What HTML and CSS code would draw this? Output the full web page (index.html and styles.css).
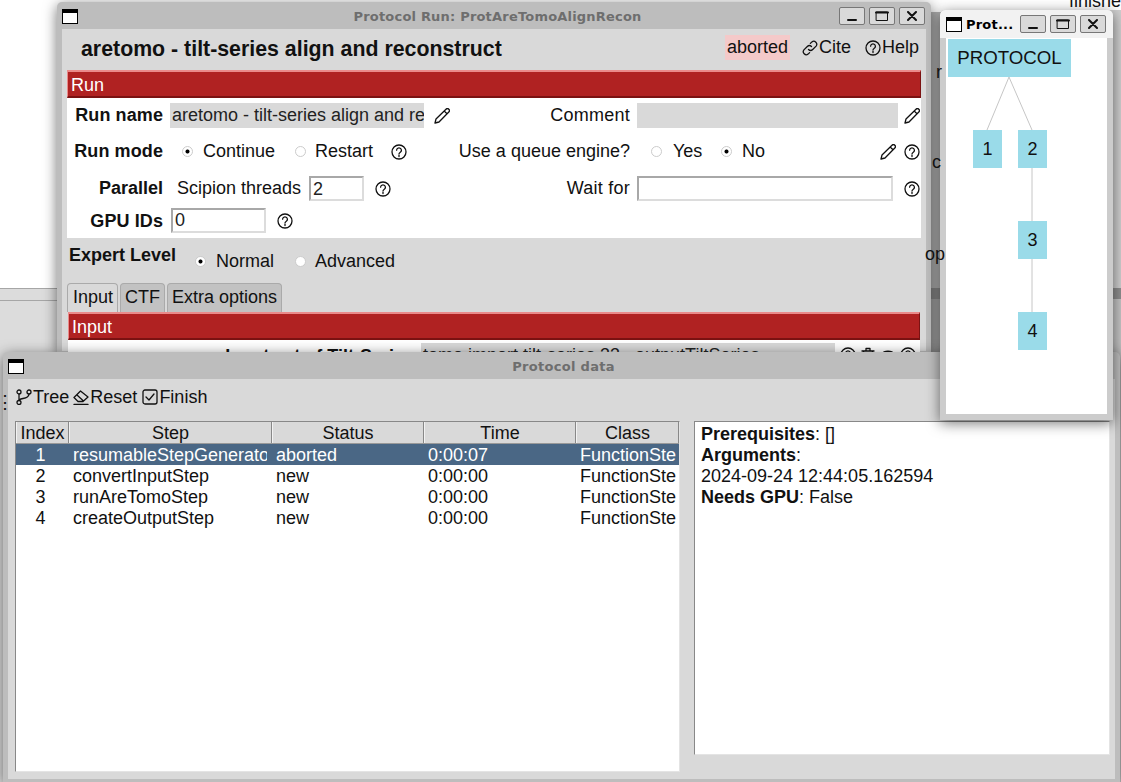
FILE: index.html
```html
<!DOCTYPE html>
<html lang="en">
<head>
    <meta charset="UTF-8">
    <title>Protocol Run</title>
    <link rel="stylesheet" href="styles.css">
</head>
<body>
    <svg class="defs" width="0" height="0">
        <symbol id="i-help" viewBox="0 0 16 16"><circle cx="8" cy="8" r="7"/><path d="M5.6 6.2a2.4 2.3 0 1 1 3.7 2c-.9.6-1.3 1-1.3 1.9"/><path class="dot" d="M8 11.4v1.2"/></symbol>
        <symbol id="i-pencil" viewBox="0 0 16 16"><path d="M12 1.2a1.6 1.6 0 0 1 2.8 2.8L5 14l-4 1 1-4zM10.2 3l2.8 2.8"/></symbol>
        <symbol id="i-link" viewBox="0 0 16 16"><path d="M6.5 9.5a3 3 0 0 0 4.2 0l3.4-3.4a3 3 0 0 0-4.2-4.2L8.4 3.4M9.5 6.500a3 3 0 0 0-4.200 0l-3.400 3.400a3 3 0 0 0 4.200 4.200l1.500-1.500"/></symbol>
        <symbol id="i-tree" viewBox="0 0 16 16"><circle cx="3" cy="3" r="2"/><circle cx="3" cy="13.5" r="2"/><circle cx="13" cy="3" r="2"/><path d="M3 5v6.500M13 5c0 3.500-3 4-6 4.500-2 .3-3 .8-4 1.500"/></symbol>
        <symbol id="i-eraser" viewBox="0 0 16 16"><path d="M1 8.500L7.500 2 15 8l-5 4.500H5zM4 6l6.500 6M1 15.500h14"/></symbol>
        <symbol id="i-check" viewBox="0 0 16 16"><rect x="1" y="1" width="14" height="14" rx="2"/><path d="M4 8l3 3 5-6"/></symbol>
        <symbol id="i-trash" viewBox="0 0 16 16"><path d="M2 4h12M6 4V1.500h4V4M3.500 4l1 11h7l1-11"/></symbol>
        <symbol id="i-eye" viewBox="0 0 16 16"><path d="M1 8c3-5 11-5 14 0-3 5-11 5-14 0z"/></symbol>
        <symbol id="b-min" viewBox="0 0 10 10"><path d="M1 9h8" stroke-width="2"/></symbol>
        <symbol id="b-max" viewBox="0 0 14 10"><path d="M1.500 1h11v8.500h-11z" stroke-width="1"/><path d="M1 1.500h12" stroke-width="2"/></symbol>
        <symbol id="b-close" viewBox="0 0 10 10"><path d="M1 1l8 8M9 1l-8 8" stroke-width="2"/></symbol>
    </svg>

    <!-- what shows of the main project window behind the dialogs -->
    <div class="desktop">
        <div class="bg-split"></div>
        <div class="bg-right"></div>
        <div class="bg-gap"></div>
        <span class="bg-text bg-finished">finished</span>
        <span class="bg-text bg-finished2">finishe</span>
        <span class="bg-text bg-r">r</span>
        <span class="bg-text bg-c">c</span>
        <span class="bg-text bg-op">op</span>
        <span class="bg-text bg-dots">⋮</span>
    </div>

    <div class="window win-run">
        <div class="titlebar">
            <span class="menu-icon"></span>
            <span class="title">Protocol Run: ProtAreTomoAlignRecon</span>
            <span class="wbtn"><svg class="b1"><use href="#b-min"/></svg></span>
            <span class="wbtn"><svg class="b2"><use href="#b-max"/></svg></span>
            <span class="wbtn"><svg class="b3"><use href="#b-close"/></svg></span>
        </div>
        <div class="content">
            <div class="head">
                <h1>aretomo - tilt-series align and reconstruct</h1>
                <span class="status-chip">aborted</span>
                <span class="head-link"><svg class="icon"><use href="#i-link"/></svg>Cite</span>
                <span class="head-link"><svg class="icon"><use href="#i-help"/></svg>Help</span>
            </div>

            <div class="section-bar">Run</div>
            <div class="form">
                <div class="row">
                    <b class="lbl">Run name</b>
                    <div class="cell">
                        <span class="ro-field rn">aretomo - tilt-series align and reconstruct</span>
                        <svg class="icon pencil-a"><use href="#i-pencil"/></svg>
                    </div>
                    <span class="lbl2 sp">Comment</span>
                    <span class="ro-field"></span>
                    <svg class="icon"><use href="#i-pencil"/></svg>
                </div>
                <div class="row mode">
                    <b class="lbl">Run mode</b>
                    <div class="cell">
                        <span class="radio on r-first"></span><span class="opt w-cont">Continue</span>
                        <span class="radio r-rest"></span><span class="opt w-rest">Restart</span>
                        <svg class="icon"><use href="#i-help"/></svg>
                    </div>
                    <span class="lbl2">Use a queue engine?</span>
                    <div class="cell">
                        <span class="radio r-yes"></span><span class="opt w-yes">Yes</span>
                        <span class="radio on"></span><span class="opt">No</span>
                        <svg class="icon pencil-b"><use href="#i-pencil"/></svg>
                    </div>
                    <svg class="icon"><use href="#i-help"/></svg>
                </div>
                <div class="row par">
                    <b class="lbl lbl-par">Parallel</b>
                    <div class="cell">
                        <span class="thr-label">Scipion threads</span>
                        <span class="input w-thr">2</span>
                        <svg class="icon help-thr"><use href="#i-help"/></svg>
                    </div>
                    <span class="lbl2 sp">Wait for</span>
                    <span class="input w-wait"></span>
                    <svg class="icon"><use href="#i-help"/></svg>
                </div>
                <div class="row gpu">
                    <b class="lbl">GPU IDs</b>
                    <div class="cell">
                        <span class="input w-gpu">0</span>
                        <svg class="icon help-gpu"><use href="#i-help"/></svg>
                    </div>
                </div>
            </div>

            <div class="expert">
                <b>Expert Level</b>
                <span class="radio on"></span><span class="opt w-norm">Normal</span>
                <span class="radio"></span><span class="opt">Advanced</span>
            </div>

            <div class="tabs">
                <span class="tab active">Input</span>
                <span class="tab">CTF</span>
                <span class="tab">Extra options</span>
            </div>
            <div class="section-bar input-bar">Input</div>
            <div class="input-panel">
                <b class="input-lbl">Input set of Tilt-Series</b>
                <span class="ro-field input-val">tomo.import tilt-series 33 . outputTiltSeries</span>
                <svg class="icon"><use href="#i-help"/></svg>
                <svg class="icon"><use href="#i-trash"/></svg>
                <svg class="icon"><use href="#i-eye"/></svg>
                <svg class="icon"><use href="#i-help"/></svg>
            </div>
        </div>
    </div>

    <div class="window win-data">
        <div class="titlebar">
            <span class="menu-icon"></span>
            <span class="title data-title">Protocol data</span>
        </div>
        <div class="content">
            <div class="toolbar">
                <span class="tool"><svg class="icon"><use href="#i-tree"/></svg>Tree</span>
                <span class="tool"><svg class="icon"><use href="#i-eraser"/></svg>Reset</span>
                <span class="tool"><svg class="icon"><use href="#i-check"/></svg>Finish</span>
            </div>
            <div class="panes">
                <div class="steps">
                    <div class="tr thead">
                        <span>Index</span><span>Step</span><span>Status</span><span>Time</span><span>Class</span>
                    </div>
                    <div class="tr selected">
                        <span>1</span><span>resumableStepGeneratorStep</span><span>aborted</span><span>0:00:07</span><span>FunctionStep</span>
                    </div>
                    <div class="tr">
                        <span>2</span><span>convertInputStep</span><span>new</span><span>0:00:00</span><span>FunctionStep</span>
                    </div>
                    <div class="tr">
                        <span>3</span><span>runAreTomoStep</span><span>new</span><span>0:00:00</span><span>FunctionStep</span>
                    </div>
                    <div class="tr">
                        <span>4</span><span>createOutputStep</span><span>new</span><span>0:00:00</span><span>FunctionStep</span>
                    </div>
                </div>
                <div class="details">
                    <p><b>Prerequisites</b>: []</p>
                    <p><b>Arguments</b>:</p>
                    <p>2024-09-24 12:44:05.162594</p>
                    <p><b>Needs GPU</b>: False</p>
                </div>
            </div>
        </div>
    </div>

    <div class="window win-tree">
        <div class="titlebar">
            <span class="menu-icon"></span>
            <span class="title tree-title">Prot...</span>
            <span class="wbtn"><svg class="b1"><use href="#b-min"/></svg></span>
            <span class="wbtn"><svg class="b2"><use href="#b-max"/></svg></span>
            <span class="wbtn"><svg class="b3"><use href="#b-close"/></svg></span>
        </div>
        <div class="canvas">
            <svg class="edges" width="161" height="376">
                <line x1="63" y1="39" x2="41" y2="92"/>
                <line x1="63" y1="39" x2="86" y2="92"/>
                <line x1="86" y1="130" x2="86" y2="183"/>
                <line x1="86" y1="221" x2="86" y2="274"/>
            </svg>
            <div class="node n-root">PROTOCOL</div>
            <div class="node n1">1</div>
            <div class="node n2">2</div>
            <div class="node n3">3</div>
            <div class="node n4">4</div>
        </div>
    </div>
</body>
</html>
```

FILE: styles.css
```css
*{
    margin: 0;
    padding: 0;
    box-sizing: border-box;
}
html, body{
    width: 100%;
    height: 100%;
    overflow: hidden;
}
body{
    position: relative;
    background: #fff;
    color: #111;
    font-family: "Liberation Sans", Arial, sans-serif;
    font-size: 18px;
}
.defs{
    position: absolute;
}
svg{
    fill: none;
    stroke: #111;
    stroke-width: 1.3;
    stroke-linecap: round;
    stroke-linejoin: round;
}

/* desktop behind the windows */
.desktop{
    position: absolute;
    inset: 0;
    overflow: hidden;
}
.bg-split{
    position: absolute;
    left: 0;
    right: 0;
    top: 288px;
    bottom: 0;
    background: #dcdcdc;
    border-top: 1px solid #a6a6a6;
}
.bg-split::before{
    content: "";
    display: block;
    height: 11px;
    border-bottom: 1px solid #a6a6a6;
}
.bg-right{
    position: absolute;
    left: 1100px;
    right: 0;
    top: 10px;
    bottom: 0;
    background: linear-gradient(#cfcfcf 0 278px, #8f8f8f 278px 289px, #c4c4c4 289px);
}
.bg-gap{
    position: absolute;
    left: 925px;
    width: 20px;
    top: 12px;
    bottom: 0;
    background: linear-gradient(#b4b4b4 0 276px, #8c8c8c 276px 287px, #a8a8a8 287px);
}
.bg-text{
    position: absolute;
    z-index: 1;
    font-size: 18px;
    line-height: 20px;
}
.bg-finished{ left: 340px; top: -17px; }
.bg-finished2{ left: 1069px; top: -9px; }
.bg-r{ left: 936px; top: 62px; }
.bg-c{ left: 932px; top: 152px; }
.bg-op{ left: 925px; top: 244px; }
.bg-dots{ left: -4px; top: 392px; }

/* windows */
.window{
    position: absolute;
    display: flex;
    flex-direction: column;
    background: #bdbdbd;
    border-radius: 5px 5px 0 0;
    box-shadow: 0 3px 14px rgba(0,0,0,.55);
    padding: 0 5px 3px;
    overflow: hidden;
}
.win-run{
    left: 57px;
    top: 2px;
    width: 874px;
    height: 352px;
}
.win-data{
    left: 3px;
    top: 352px;
    width: 1117px;
    height: 430px;
}
.win-tree{
    left: 940px;
    top: 10px;
    width: 173px;
    height: 410px;
    background: #ccc;
    padding: 0 6px 6px;
}
.titlebar{
    flex: none;
    display: flex;
    align-items: center;
    height: 27px;
    padding-top: 1px;
}
.win-run .titlebar{
    padding-right: 1px;
}
.win-tree .titlebar{
    height: 28px;
    margin: 0 -6px;
    padding: 0 7px 0 6px;
    background: #f2f2f2;
    border-radius: 5px 5px 0 0;
}
.menu-icon{
    flex: none;
    width: 16px;
    height: 15px;
    background: #fff;
    border: 1px solid #000;
    border-top-width: 4px;
}
.title{
    flex: 1;
    text-align: center;
    font-family: "DejaVu Sans", sans-serif;
    font-weight: bold;
    font-size: 13px;
    letter-spacing: .2px;
    color: #6e6e6e;
}
.win-run .title{
    padding-left: 82px;
}
.data-title{
    padding-right: 12px;
    letter-spacing: .3px;
}
.tree-title{
    text-align: left;
    padding-left: 4px;
    color: #000;
    white-space: nowrap;
}
.wbtn{
    flex: none;
    display: flex;
    align-items: center;
    justify-content: center;
    width: 26px;
    height: 18px;
    margin-left: 4px;
    background: #d9d9d9;
    border: 1px solid #777;
    border-radius: 2px;
}
.wbtn svg{
    stroke: #111;
    fill: none;
}
.wbtn .b1{ width: 10px; height: 10px; }
.wbtn .b2{ width: 14px; height: 10px; }
.wbtn .b3{ width: 10px; height: 10px; }
.content{
    flex: 1;
    min-height: 0;
    background: #d9d9d9;
}

/* run form */
.icon{
    flex: none;
    width: 16px;
    height: 16px;
}
.head{
    display: flex;
    align-items: center;
    height: 41px;
    padding-left: 19px;
}
.head h1{
    flex: 1;
    font-size: 21.33px;
    font-weight: bold;
    white-space: nowrap;
}
.status-chip{
    display: flex;
    align-items: center;
    height: 25px;
    margin-top: -5px;
    padding: 0 2px;
    background: #f4c9c9;
    margin-right: 12px;
}
.head-link{
    display: flex;
    align-items: center;
    margin-top: -4px;
    margin-right: 14px;
    gap: 1px;
}
.head-link:last-child{
    margin-right: 7px;
}
.section-bar{
    height: 28px;
    margin: 0 5px;
    padding-left: 3px;
    line-height: 27px;
    color: #fff;
    background: #b02222;
    border-top: 2px solid #ea8a8a;
    border-left: 1px solid #ea8a8a;
    border-right: 1px solid #7b1212;
    border-bottom: 2px solid #7b1212;
}
.form{
    height: 140px;
    margin: 0 5px;
    padding-top: 5px;
    background: #fff;
}
.row{
    display: grid;
    grid-template-columns: 96px 377px 76px 261px 16px;
    column-gap: 7px;
    align-items: center;
    height: 25px;
}
.row > svg{
    margin-left: -1px;
}
.row.mode{ margin-top: 11px; }
.row.par{ margin-top: 12px; }
.row.gpu{ margin-top: 7px; }
.lbl{
    text-align: right;
    letter-spacing: .1px;
}
.lbl-par{
    letter-spacing: 0;
}
.row.gpu .lbl{
    padding-top: 2px;
}
.lbl2{
    display: flex;
    justify-content: flex-end;
    white-space: nowrap;
}
.sp{
    letter-spacing: .25px;
}
.cell{
    display: flex;
    align-items: center;
    min-width: 0;
}
.ro-field{
    display: block;
    height: 25px;
    line-height: 25px;
    padding-left: 2px;
    background: #d9d9d9;
    overflow: hidden;
    white-space: nowrap;
    color: #222;
}
.rn{
    flex: none;
    width: 254px;
}
.pencil-a{
    margin-left: 10px;
}
.pencil-b{
    margin-left: auto;
    margin-right: 2px;
}
.radio{
    flex: none;
    width: 11px;
    height: 11px;
    margin-right: 10px;
    border-radius: 50%;
    background: #fff;
    border: 1px solid #ccc;
}
.radio.on{
    background: radial-gradient(circle, #000 0 1.6px, #fff 2.4px);
}
.r-first{ margin-left: 12px; }
.r-rest{ margin-right: 9px; }
.r-yes{ margin-left: 14px; margin-right: 11px; }
.opt{
    white-space: nowrap;
}
.w-cont{ width: 92px; }
.w-rest{ width: 76px; }
.w-yes{ width: 48px; }
.w-norm{ width: 79px; }
.input{
    display: block;
    height: 25px;
    line-height: 22px;
    padding-left: 2px;
    background: #fff;
    border: 2px solid;
    border-color: #a8a8a8 #dcdcdc #dcdcdc #a8a8a8;
    color: #222;
}
.thr-label{
    margin-left: 7px;
    margin-right: 8px;
    white-space: nowrap;
}
.w-thr{ width: 55px; }
.help-thr{ margin-left: 11px; }
.w-wait{ width: 256px; }
.w-gpu{ width: 95px; margin-left: 1px; line-height: 20px; }
.help-gpu{ margin-left: 11px; }
.expert{
    display: flex;
    align-items: center;
    height: 45px;
    padding-left: 7px;
    padding-top: 1px;
}
.expert b{
    width: 126px;
    margin-top: -11px;
}
.expert .radio{
    margin-right: 9px;
}
.expert .radio.on{
    margin-right: 10px;
}
.tabs{
    display: flex;
    gap: 2px;
    height: 29px;
    margin-left: 5px;
}
.tab{
    padding: 3px 4px 0;
    background: #c2c2c2;
    border: 1px solid #aaa;
    border-bottom: 0;
    border-radius: 4px 4px 0 0;
}
.tab.active{
    padding-left: 5px;
    background: #d9d9d9;
}
.input-bar{
    margin: 0 6px;
}
.input-panel{
    display: flex;
    gap: 4px;
    height: 60px;
    margin: 0 6px;
    padding-top: 3px;
    background: #fff;
}
.input-panel .icon{
    margin-top: 4px;
}
.input-lbl{
    width: 346px;
    text-align: right;
    margin-right: 3px;
    padding-top: 3px;
    white-space: nowrap;
}
.input-val{
    width: 414px;
    margin-right: 1px;
}

/* protocol data */
.toolbar{
    display: flex;
    align-items: center;
    gap: 4px;
    height: 36px;
    padding-left: 8px;
}
.tool{
    display: flex;
    align-items: center;
    gap: 1px;
}
.tool:last-child{
    margin-left: 1px;
}
.panes{
    display: flex;
    align-items: flex-start;
    gap: 14px;
    margin-top: 6px;
    padding-left: 7px;
}
.steps{
    width: 665px;
    height: 351px;
    background: #fff;
    border: 1px solid;
    border-color: #888 #e4e4e4 #e4e4e4 #888;
}
.tr{
    display: grid;
    grid-template-columns: 53px 203px 152px 152px 103px;
    height: 21px;
    line-height: 23px;
}
.tr span{
    padding-left: 4px;
    border-right: 3px solid transparent;
    overflow: hidden;
    white-space: nowrap;
}
.tr span:first-child{
    text-align: center;
    padding: 0 4px 0 0;
    border-right: 0;
}
.tr span:nth-child(2){
    border-right-width: 5px;
}
.tr.thead{
    height: 22px;
    line-height: 22px;
    background: #d9d9d9;
    border-bottom: 1px solid #999;
}
.thead span, .tr.thead span:first-child, .tr.thead span:nth-child(2){
    padding: 0;
    text-align: center;
    border-left: 1px solid #f2f2f2;
    border-right: 1px solid #888;
}
.selected{
    background: #4a6785;
    color: #fff;
}
.details{
    width: 416px;
    height: 334px;
    padding: 2px 0 0 6px;
    background: #fff;
    border: 1px solid;
    border-color: #888 #e4e4e4 #e4e4e4 #888;
    line-height: 21px;
}

/* tree canvas */
.canvas{
    position: relative;
    flex: 1;
    background: #fff;
}
.edges{
    position: absolute;
    left: 0;
    top: 0;
}
.edges line{
    stroke: #c6c6c6;
    stroke-width: 1;
}
.node{
    position: absolute;
    width: 29px;
    height: 38px;
    line-height: 38px;
    text-align: center;
    background: #9adbe9;
    color: #111;
}
.n-root{ left: 2px; top: 1px; width: 123px; font-size: 18.7px; }
.n1{ left: 27px; top: 92px; }
.n2{ left: 72px; top: 92px; }
.n3{ left: 72px; top: 183px; }
.n4{ left: 72px; top: 274px; }
```
